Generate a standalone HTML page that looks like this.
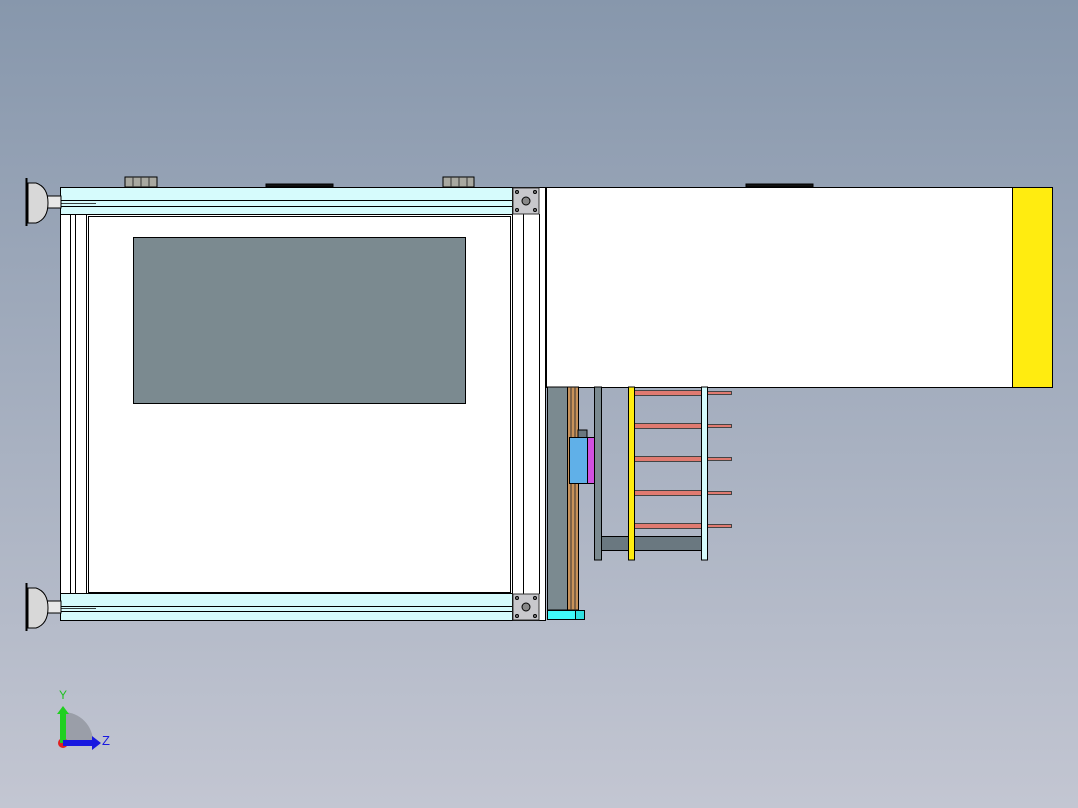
<!DOCTYPE html>
<html><head><style>
html,body{margin:0;padding:0;width:1078px;height:808px;overflow:hidden;background:linear-gradient(#8797ac,#c3c6d2);}
svg{position:absolute;left:0;top:0}
</style></head><body>
<svg width="1078" height="808" viewBox="0 0 1078 808" stroke="#000" stroke-width="1">
<!-- hinges -->
<g fill="#a8a8a0"><rect x="125" y="177" width="32" height="10"/><rect x="443" y="177" width="31" height="10"/></g>
<g stroke="#333"><line x1="133" y1="177" x2="133" y2="187"/><line x1="141" y1="177" x2="141" y2="187"/><line x1="149" y1="177" x2="149" y2="187"/><line x1="451" y1="177" x2="451" y2="187"/><line x1="459" y1="177" x2="459" y2="187"/><line x1="467" y1="177" x2="467" y2="187"/></g>
<rect x="266" y="184" width="67" height="3" fill="#111"/>
<rect x="746" y="184" width="67" height="3" fill="#111"/>
<!-- frame -->
<rect x="60.5" y="187.5" width="485" height="433" fill="#fff"/>
<rect x="88.5" y="216.5" width="422" height="376" fill="#fff"/>
<g fill="none"><line x1="70.5" y1="214" x2="70.5" y2="594"/><line x1="75.5" y1="214" x2="75.5" y2="594"/><line x1="86.5" y1="214" x2="86.5" y2="594"/><line x1="512.5" y1="214" x2="512.5" y2="594"/><line x1="523.5" y1="214" x2="523.5" y2="594"/><line x1="539.5" y1="214" x2="539.5" y2="594"/></g>
<rect x="133.5" y="237.5" width="332" height="166" fill="#7b8a90"/>
<!-- rails -->
<rect x="60.5" y="187.5" width="452" height="27" fill="#d6fbfc"/>
<line x1="60" y1="200.5" x2="512" y2="200.5"/><line x1="60" y1="206.5" x2="512" y2="206.5"/>
<line x1="60" y1="203.5" x2="96" y2="203.5" stroke-width="0.7"/>
<rect x="60.5" y="593.5" width="452" height="27" fill="#d6fbfc"/>
<line x1="60" y1="606.5" x2="512" y2="606.5"/><line x1="60" y1="611.5" x2="512" y2="611.5"/>
<line x1="60" y1="608.5" x2="96" y2="608.5" stroke-width="0.7"/>
<!-- connectors -->
<g fill="#c8c8cc" stroke="#333"><rect x="513" y="188" width="26" height="26"/><rect x="513" y="594" width="26" height="26"/></g>
<g fill="#888"><circle cx="526" cy="201" r="4"/><circle cx="526" cy="607" r="4"/><circle cx="517" cy="192" r="1.5"/><circle cx="535" cy="192" r="1.5"/><circle cx="517" cy="210" r="1.5"/><circle cx="535" cy="210" r="1.5"/><circle cx="517" cy="598" r="1.5"/><circle cx="535" cy="598" r="1.5"/><circle cx="517" cy="616" r="1.5"/><circle cx="535" cy="616" r="1.5"/></g>
<!-- feet -->
<g>
<rect x="45" y="196" width="16" height="12" fill="#e8e8e8"/>
<path d="M28 183 h8 q12 4 12 20 q0 16 -12 20 h-8z" fill="#d8d8d8"/>
<line x1="26.5" y1="178" x2="26.5" y2="226" stroke-width="2"/>
<rect x="45" y="601" width="16" height="12" fill="#e8e8e8"/>
<path d="M28 588 h8 q12 4 12 20 q0 16 -12 20 h-8z" fill="#d8d8d8"/>
<line x1="26.5" y1="583" x2="26.5" y2="631" stroke-width="2"/>
</g>
<!-- right box -->
<rect x="546.5" y="187.5" width="466" height="200" fill="#fff"/>
<rect x="1012.5" y="187.5" width="40" height="200" fill="#ffec10"/>
<!-- lower mechanism -->
<rect x="547.5" y="387" width="20" height="223" fill="#7b8a90"/>
<rect x="567.5" y="387" width="11" height="223" fill="#c8925a"/>
<g stroke="#333"><line x1="571" y1="387" x2="571" y2="610"/><line x1="575" y1="387" x2="575" y2="610"/></g>
<rect x="547.5" y="610.5" width="28" height="9" fill="#40f8f8"/>
<rect x="575.5" y="610.5" width="9" height="9" fill="#30e0e0"/>
<rect x="578" y="430" width="9" height="8" fill="#6a7880"/>
<rect x="569.5" y="437.5" width="18" height="46" fill="#60b0e8"/>
<rect x="587.5" y="437.5" width="7" height="46" fill="#d050e0"/>
<rect x="594.5" y="387" width="7" height="173" fill="#7b8a90"/>
<rect x="601.5" y="536.5" width="100" height="14" fill="#6a7880"/>
<g fill="#e07a70" stroke="#444">
<rect x="634.5" y="390.5" width="67" height="5"/><rect x="634.5" y="423.5" width="67" height="5"/><rect x="634.5" y="456.5" width="67" height="5"/><rect x="634.5" y="490.5" width="67" height="5"/><rect x="634.5" y="523.5" width="67" height="5"/>
<rect x="707.5" y="391.5" width="24" height="3"/><rect x="707.5" y="424.5" width="24" height="3"/><rect x="707.5" y="457.5" width="24" height="3"/><rect x="707.5" y="491.5" width="24" height="3"/><rect x="707.5" y="524.5" width="24" height="3"/>
</g>
<rect x="628.5" y="387" width="6" height="173" fill="#ffec10"/>
<rect x="701.5" y="387" width="6" height="173" fill="#d6fbfc"/>
<!-- triad -->
<path d="M63 742 V712 A30 30 0 0 1 93 742 Z" fill="#9a9ea8" stroke="none"/>
<circle cx="63" cy="743" r="5" fill="#e02020" stroke="none"/>
<rect x="60" y="713" width="6" height="30" fill="#20d020" stroke="none"/>
<path d="M57 714 L63 706 L69 714Z" fill="#20d020" stroke="none"/>
<rect x="63" y="740" width="30" height="6" fill="#1818e0" stroke="none"/>
<path d="M92 736 L101 743 L92 750Z" fill="#1818e0" stroke="none"/>
<text x="59" y="699" font-family="Liberation Sans,sans-serif" font-size="12" fill="#20c020" stroke="none">Y</text>
<text x="102" y="745" font-family="Liberation Sans,sans-serif" font-size="13" fill="#1818e0" stroke="none">Z</text>
</svg>
</body></html>
